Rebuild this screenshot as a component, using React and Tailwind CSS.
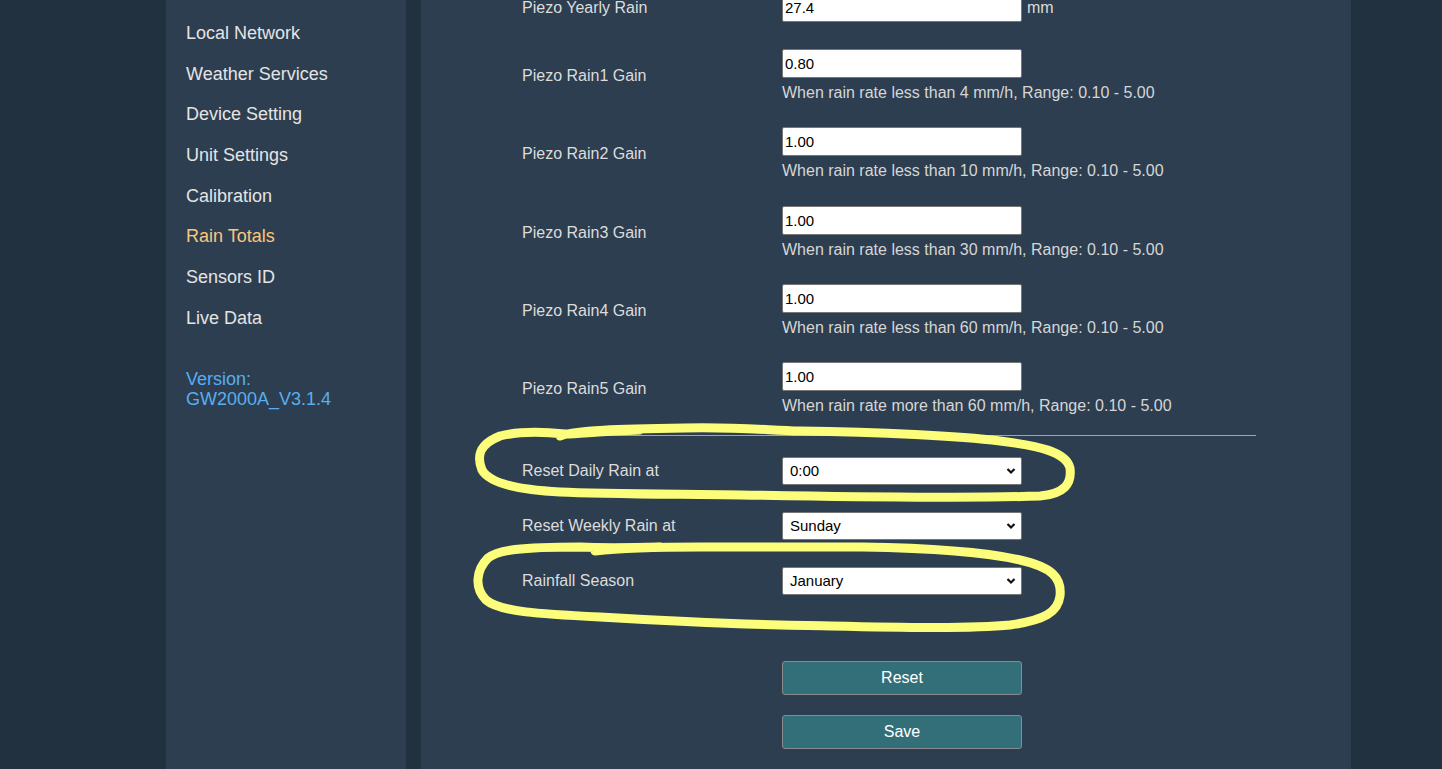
import { useState } from 'react';

const navItems = [
  'Local Network',
  'Weather Services',
  'Device Setting',
  'Unit Settings',
  'Calibration',
  'Rain Totals',
  'Sensors ID',
  'Live Data',
];

const gains = [
  { label: 'Piezo Rain1 Gain', value: '0.80', note: 'When rain rate less than 4 mm/h, Range: 0.10 - 5.00' },
  { label: 'Piezo Rain2 Gain', value: '1.00', note: 'When rain rate less than 10 mm/h, Range: 0.10 - 5.00' },
  { label: 'Piezo Rain3 Gain', value: '1.00', note: 'When rain rate less than 30 mm/h, Range: 0.10 - 5.00' },
  { label: 'Piezo Rain4 Gain', value: '1.00', note: 'When rain rate less than 60 mm/h, Range: 0.10 - 5.00' },
  { label: 'Piezo Rain5 Gain', value: '1.00', note: 'When rain rate more than 60 mm/h, Range: 0.10 - 5.00' },
];

const Chevron = () => (
  <svg
    className="absolute right-[6px] top-1/2 -translate-y-1/2 pointer-events-none"
    width="10"
    height="7"
    viewBox="0 0 10 7"
  >
    <path d="M1.5 1.5 L5 5 L8.5 1.5" fill="none" stroke="#111" strokeWidth="2.2" />
  </svg>
);

const SelectRow = ({ label, value, options, onChange }) => (
  <div className="flex items-center h-[28px] mb-[27px]">
    <div className="w-[260px] text-[16px] text-[#dcdcdc]">{label}</div>
    <div className="relative w-[240px] h-[28px]">
      <select
        value={value}
        onChange={(e) => onChange(e.target.value)}
        className="appearance-none w-full h-full bg-white border border-[#767676] rounded-[2px] pl-[7px] text-[15px] text-black outline-none"
      >
        {options.map((o) => (
          <option key={o} value={o}>{o}</option>
        ))}
      </select>
      <Chevron />
    </div>
  </div>
);

export default function App() {
  const [daily, setDaily] = useState('0:00');
  const [weekly, setWeekly] = useState('Sunday');
  const [season, setSeason] = useState('January');

  return (
    <div className="relative h-screen w-full overflow-hidden bg-[#223140] flex font-['Liberation_Sans',Arial,sans-serif]">
      {/* sidebar */}
      <div className="ml-[166px] w-[240px] h-full bg-[#2d3e50] pl-[20px] pt-[13px]">
        {navItems.map((item) => (
          <div
            key={item}
            className={`h-[40.7px] flex items-center text-[18px] ${item === 'Rain Totals' ? 'text-[#f9c77c]' : 'text-[#e4e4e4]'}`}
          >
            {item}
          </div>
        ))}
        <div className="mt-[30px] text-[18px] leading-[20px] text-[#58aef0]">
          <div>Version:</div>
          <div>GW2000A_V3.1.4</div>
        </div>
      </div>

      {/* main */}
      <div className="ml-[15px] w-[930px] h-full bg-[#2d3e50] pl-[99px]">
        <div className="mt-[-7px] flex flex-col">
          <div className="flex h-[56px]">
            <div className="w-[262px] pl-[2px] h-[30px] flex items-center text-[16px] text-[#dcdcdc]">Piezo Yearly Rain</div>
            <input
              defaultValue="27.4"
              className="w-[240px] h-[29px] bg-white border border-[#767676] rounded-[2px] px-[2px] text-[15px] text-black outline-none"
            />
            <span className="ml-[5px] h-[30px] flex items-center text-[16px] text-[#dcdcdc]">mm</span>
          </div>

          {gains.map((g, i) => (
            <div key={g.label} className={`flex items-center ${i === gains.length - 1 ? 'mb-[19px]' : 'mb-[24.25px]'}`}>
              <div className="w-[262px] pl-[2px] text-[16px] text-[#dcdcdc]">{g.label}</div>
              <div className="flex flex-col">
                <input
                  defaultValue={g.value}
                  className="w-[240px] h-[29px] bg-white border border-[#767676] rounded-[2px] px-[2px] text-[15px] text-black outline-none"
                />
                <div className="mt-[5px] leading-[20px] text-[16px] text-[#d6d6d6]">{g.note}</div>
              </div>
            </div>
          ))}

          <div className="w-[738px] ml-[-2px] h-px bg-[#6cb4e6] mb-[21px]" />

          <div className="pl-[2px]">
            <SelectRow
              label="Reset Daily Rain at"
              value={daily}
              onChange={setDaily}
              options={['0:00', '1:00', '2:00', '3:00', '4:00', '5:00', '6:00', '7:00', '8:00']}
            />
            <SelectRow
              label="Reset Weekly Rain at"
              value={weekly}
              onChange={setWeekly}
              options={['Sunday', 'Monday', 'Tuesday', 'Wednesday', 'Thursday', 'Friday', 'Saturday']}
            />
            <SelectRow
              label="Rainfall Season"
              value={season}
              onChange={setSeason}
              options={['January', 'February', 'March', 'April', 'May', 'June', 'July', 'August', 'September', 'October', 'November', 'December']}
            />

            <div className="ml-[260px] mt-[66px] flex flex-col gap-[20px]">
              <button className="w-[240px] h-[34px] bg-[#336f79] border border-[#8a8a8a] rounded-[3px] text-white text-[16px]">
                Reset
              </button>
              <button className="w-[240px] h-[34px] bg-[#336f79] border border-[#8a8a8a] rounded-[3px] text-white text-[16px]">
                Save
              </button>
            </div>
          </div>
        </div>
      </div>

      {/* hand drawn highlight marks */}
      <svg className="absolute inset-0 pointer-events-none" width="1442" height="769" viewBox="0 0 1442 769">
        <path
          d="M560 436 C575 430 620 429 685 428 C740 427 765 430 800 431 C880 432 960 436 1000 441 C1040 446 1066 452 1070 468 C1072 484 1064 494 1040 496 C960 499 820 496 741 495 C660 494 600 494 560 492 C520 490 490 484 482 470 C476 455 480 444 500 436 C520 431 545 432 565 434 C580 434 600 431 640 430"
          fill="none"
          stroke="#fdfd7c"
          strokeWidth="9"
          strokeLinecap="round"
          strokeLinejoin="round"
        />
        <path
          d="M595 551 C630 547 670 547 701 547 C780 547 830 547 862 547 C930 548 985 552 1020 560 C1052 567 1062 578 1060 596 C1058 612 1045 620 1010 625 C960 630 850 626 781 625 C700 623 650 620 600 617 C540 614 500 612 486 600 C474 588 476 570 488 558 C498 550 520 547 580 547 C600 548 620 548 660 547"
          fill="none"
          stroke="#fdfd7c"
          strokeWidth="9"
          strokeLinecap="round"
          strokeLinejoin="round"
        />
      </svg>
    </div>
  );
}
